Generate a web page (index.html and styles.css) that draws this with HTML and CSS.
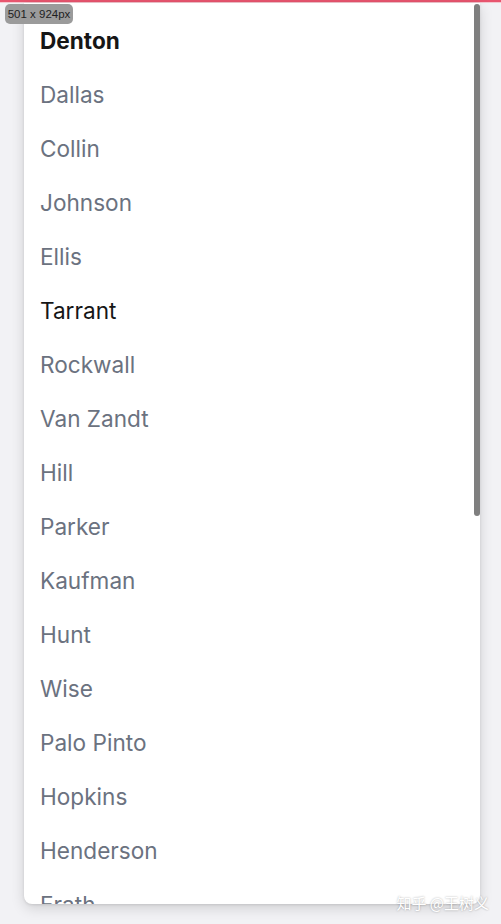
FILE: index.html
```html
<!DOCTYPE html>
<html lang="en">
<head>
    <meta charset="UTF-8">
    <meta name="viewport" content="width=device-width, initial-scale=1.0">
    <title>Counties</title>
    <link rel="stylesheet" href="styles.css">
</head>
<body>
    <div class="top-bar"></div>
    <div class="stage">
        <ul class="county-list">
            <li class="county active">Denton</li>
            <li class="county">Dallas</li>
            <li class="county">Collin</li>
            <li class="county">Johnson</li>
            <li class="county">Ellis</li>
            <li class="county hover">Tarrant</li>
            <li class="county">Rockwall</li>
            <li class="county">Van Zandt</li>
            <li class="county">Hill</li>
            <li class="county">Parker</li>
            <li class="county">Kaufman</li>
            <li class="county">Hunt</li>
            <li class="county">Wise</li>
            <li class="county">Palo Pinto</li>
            <li class="county">Hopkins</li>
            <li class="county">Henderson</li>
            <li class="county">Erath</li>
        </ul>
        <div class="scroll-thumb"></div>
    </div>
    <div class="size-tag">501 x 924px</div>
    <div class="watermark">知乎 @王树义</div>
</body>
</html>
```

FILE: styles.css
```css
* {
    margin: 0;
    padding: 0;
    box-sizing: border-box;
}

body {
    font-family: 'Inter', 'Noto Sans', sans-serif;
    background: #f2f2f5;
    height: 924px;
    overflow: hidden;
    position: relative;
}

.top-bar {
    height: 3px;
    background: #e8556f;
    border-bottom: 1px solid #f3c6cf;
}

.stage {
    position: relative;
    margin: 0 21px 0 24px;
    height: 901px;
    background: #fff;
    border-radius: 0 0 8px 8px;
    box-shadow: 0 4px 14px rgba(0, 0, 0, 0.14), 0 1px 3px rgba(0, 0, 0, 0.1);
    overflow: hidden;
}

.county-list {
    list-style: none;
    padding-top: 10px;
}

.county {
    height: 54px;
    display: flex;
    align-items: center;
    padding-left: 16px;
    font-size: 22.6px;
    color: #6b7280;
}

.county.active {
    color: #161616;
    font-weight: 700;
}

.county.hover {
    color: #161616;
}

.scroll-thumb {
    position: absolute;
    top: 1px;
    right: 0;
    width: 6px;
    height: 512px;
    background: #7f7f7f;
    border-radius: 3px;
}

.size-tag {
    position: absolute;
    top: 4px;
    left: 5px;
    width: 68px;
    height: 20px;
    line-height: 20px;
    text-align: center;
    background: #9b9b9b;
    color: #1e1e1e;
    font-family: 'Liberation Sans', Arial, sans-serif;
    font-size: 11.5px;
    border-radius: 5px;
}

.watermark {
    position: absolute;
    right: 12px;
    top: 892px;
    font-family: 'Noto Sans CJK SC', sans-serif;
    font-size: 15px;
    color: #fff;
    text-shadow: 0 0 2px rgba(0, 0, 0, 0.35);
}
```
